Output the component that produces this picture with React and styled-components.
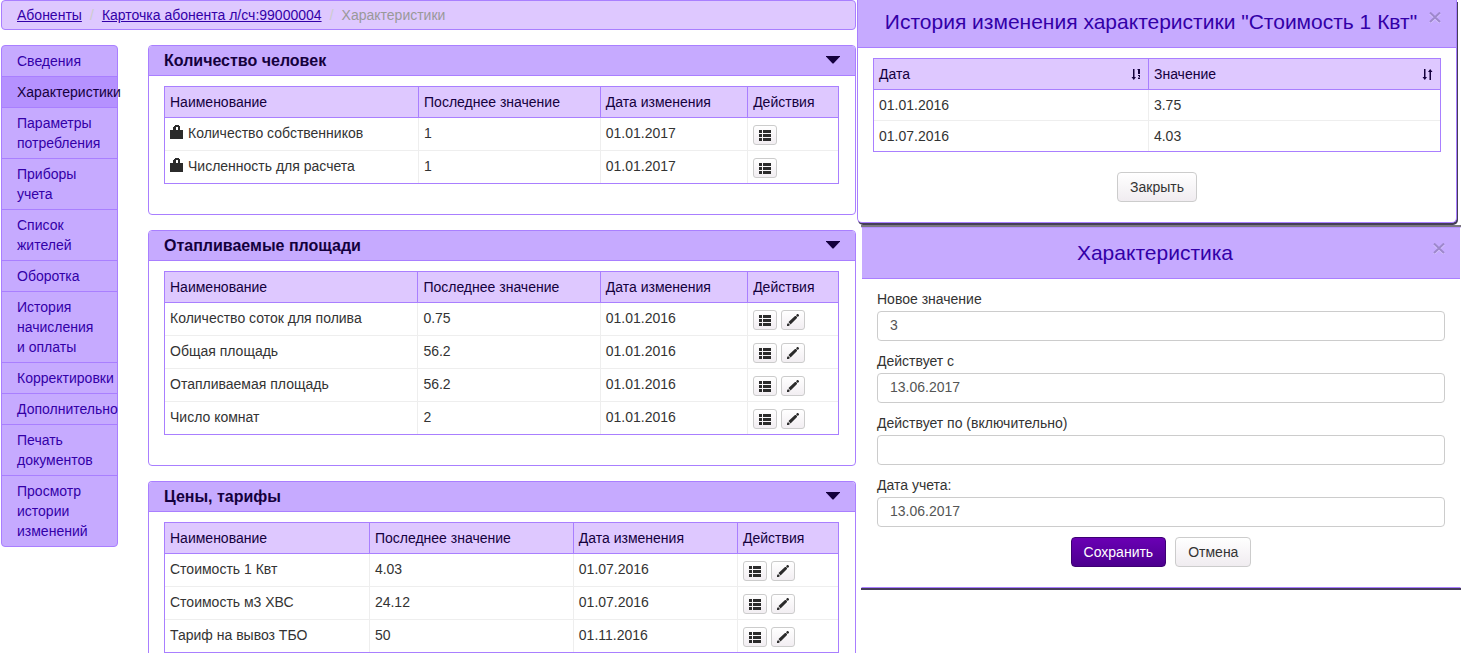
import React from 'react';
import styled, { createGlobalStyle } from 'styled-components';

const GlobalStyle = createGlobalStyle`
  * {
    box-sizing: border-box;
  }

  body {
    margin: 0;
    background-color: white;
    color: #333333;
    font-family: 'Liberation Sans', Arial, sans-serif;
    font-size: 14px;
    line-height: 20px;
  }

  button,
  input {
    font: inherit;
  }
`;

const Page = styled.div`
  display: grid;
  grid-template-columns: minmax(0, 857fr) minmax(0, 604fr);
  align-items: start;
`;

const MainColumn = styled.div`
  padding: 0 1px;
`;

const Breadcrumb = styled.nav`
  display: flex;
  height: 30px;
  padding: 4px 15px;
  border: 1px solid #a97fff;
  border-radius: 4px;
  background-color: #dec8ff;
  white-space: nowrap;
`;

const Crumb = styled.a`
  color: #3300a8;
  text-decoration: underline;
`;

const CrumbSeparator = styled.span`
  width: 20px;
  text-align: center;
  color: #cccccc;
`;

const CurrentCrumb = styled.span`
  color: #999999;
`;

const Columns = styled.div`
  display: flex;
  align-items: flex-start;
  gap: 30px;
  margin-top: 15px;
`;

const Menu = styled.nav`
  flex: none;
  width: 117px;
  border: 1px solid #a97fff;
  border-radius: 4px;
  background-color: #c6aaff;
`;

const MenuLink = styled.a`
  display: block;
  padding: 5px 14px 5px 15px;
  background-color: ${({ $active }) => ($active ? '#b591ff' : 'transparent')};
  color: ${({ $active }) => ($active ? '#14003d' : '#3300a8')};
  text-decoration: none;

  & + & {
    border-top: 1px solid #a97fff;
  }
`;

const Panels = styled.main`
  flex: 1;
  min-width: 0;
  display: flex;
  flex-direction: column;
  gap: 15px;
`;

const Panel = styled.section`
  border: 1px solid #a97fff;
  border-radius: 4px;
  background-color: white;

  &:last-child {
    border-bottom: none;
    border-radius: 4px 4px 0 0;
  }
`;

const PanelHeader = styled.header`
  display: flex;
  align-items: center;
  justify-content: space-between;
  height: 30px;
  padding: 0 15px;
  border-bottom: 1px solid #a97fff;
  border-radius: 3px 3px 0 0;
  background-color: #c6aaff;
`;

const PanelTitle = styled.h2`
  margin: 0;
  color: #14003d;
  font-size: 16px;
  line-height: 20px;
`;

const ToggleButton = styled.button`
  display: flex;
  padding: 0;
  border: none;
  background: none;
  cursor: pointer;
`;

const PanelBody = styled.div`
  padding: 10px 16px 30px 15px;

  ${Panel}:last-child & {
    padding-bottom: 0;
  }
`;

const Table = styled.table`
  width: 100%;
  table-layout: fixed;
  border: 1px solid #a97fff;
  border-collapse: separate;
  border-spacing: 0;
`;

const HeadCell = styled.th`
  width: ${({ $width }) => $width || 'auto'};
  padding: 5px;
  border-bottom: 1px solid #a97fff;
  background-color: #dec8ff;
  color: #14003d;
  font-weight: normal;
  text-align: left;
  white-space: nowrap;

  & + & {
    border-left: 1px solid #a97fff;
  }
`;

const HeadContent = styled.div`
  display: flex;
  align-items: center;
  justify-content: space-between;
  padding-right: 2px;
`;

const Cell = styled.td`
  padding: 5px;
  vertical-align: top;

  & + & {
    border-left: 1px solid #eeeeee;
  }

  tr + tr > & {
    border-top: 1px solid #eeeeee;
  }
`;

const NameContent = styled.div`
  display: flex;
  align-items: flex-start;
  gap: 5px;
`;

const Actions = styled.div`
  display: flex;
  gap: 4px;
  padding-top: 2px;
`;

const IconButton = styled.button`
  display: flex;
  align-items: center;
  justify-content: center;
  width: 24px;
  height: 20px;
  padding: 0;
  border: 1px solid #cccccc;
  border-radius: 3px;
  background: linear-gradient(#ffffff, #f2eef2);
  cursor: pointer;
`;

const Dialogs = styled.div`
  display: flex;
  flex-direction: column;
  gap: 4px;
`;

const Dialog = styled.section`
  margin-right: 4px;
  border: 1px solid #a97fff;
  border-top: none;
  border-radius: 0 0 5px 5px;
  background-color: white;
  box-shadow: 1px 2px 0 #453d58;
`;

const FormDialog = styled(Dialog)`
  margin-right: 0;
  margin-left: 4px;
  border-top: 1px solid #b591ff;
  border-right-color: transparent;
  border-left-color: transparent;
  border-radius: 0;
  box-shadow: 0 2px 0 #453d58, 0 -2px 0 #7b7880;
`;

const DialogHeader = styled.header`
  display: flex;
  align-items: center;
  padding: ${({ $tall }) => ($tall ? '11px 15px 12px' : '8px 15px 12px')};
  border-bottom: 1px solid #a97fff;
  background-color: #c6aaff;
`;

const DialogTitle = styled.h3`
  flex: 1;
  margin: 0;
  color: #3300a8;
  font-size: 21px;
  font-weight: normal;
  line-height: 27px;
  text-align: center;
  white-space: nowrap;
`;

const CloseButton = styled.button`
  display: flex;
  align-self: flex-start;
  padding: 4px 0;
  border: none;
  background: none;
  cursor: pointer;
`;

const DialogBody = styled.div`
  padding: 10px 15px 20px;
`;

const DialogButtons = styled.div`
  display: flex;
  justify-content: center;
  gap: 9px;
  margin-top: ${({ $spaced }) => ($spaced ? '20px' : '10px')};
`;

const Button = styled.button`
  height: 30px;
  padding: 4px 12px;
  border: 1px solid ${({ $primary }) => ($primary ? '#3d0073' : '#cccccc')};
  border-radius: 4px;
  background: ${({ $primary }) =>
    $primary ? 'linear-gradient(#6a00b4, #4c008f)' : 'linear-gradient(#ffffff, #f0ecf0)'};
  color: ${({ $primary }) => ($primary ? 'white' : '#333333')};
  line-height: 20px;
  cursor: pointer;
`;

const Field = styled.div`
  & + & {
    margin-top: 10px;
  }
`;

const Label = styled.label`
  display: block;
  margin-bottom: 2px;
`;

const Input = styled.input`
  display: block;
  width: 100%;
  height: 30px;
  padding: 3px 12px 5px;
  border: 1px solid #cccccc;
  border-radius: 4px;
  background-color: white;
  color: #555555;
  line-height: 20px;
`;

const CaretIcon = () => (
  <svg width="14" height="9" viewBox="0 0 14 9" fill="#14003d">
    <path d="M0 0h14v.500L7.500 7.500h-1L0 .500z" />
  </svg>
);

const LockIcon = () => (
  <svg width="13" height="16" viewBox="0 -2 13 16" fill="#2b2b2b">
    <path fillRule="evenodd" d="M0 5h3V2h1V1h1V0h4v1h1v4h3v9H0zM6 2v3h2V2z" />
  </svg>
);

const ListIcon = () => (
  <svg width="12" height="11" viewBox="0 0 12 11" fill="#2b2b2b">
    <path d="M0 0h3v3H0zM4 0h8v3H4zM0 4h3v3H0zM4 4h8v3H4zM0 8h3v3H0zM4 8h8v3H4z" />
  </svg>
);

const PencilIcon = () => (
  <svg width="12" height="12" viewBox="0 0 12 12" fill="#2b2b2b">
    <path d="M0 12v-1.500L1 9l2 2-1.500 1zM1.500 8L8 2h1l1 1v1l-6.500 6.500zM9 1.200L10.200 0H11l1 1v.800L10.800 3z" />
  </svg>
);

const CloseIcon = () => (
  <svg width="12" height="11" viewBox="0 0 12 11" fill="none" strokeWidth="2">
    <path d="M1 1.500l10 9.500M11 1.500L1 11" stroke="#d9c8ff" />
    <path d="M1 .5l10 9.500M11 .5L1 10" stroke="#9e88cc" />
  </svg>
);

const SortedIcon = () => (
  <svg width="10" height="11" viewBox="0 0 10 11" fill="#14003d">
    <path d="M2 0h1.500v8H5L2.800 11 .5 8H2zM7 0h2v5H7zM6.500 0H8v1H6.500zM7 6h2v2L8 9h1v1H7V9l1-1V7H7z" />
  </svg>
);

const SortIcon = () => (
  <svg width="11" height="11" viewBox="0 0 11 11" fill="#14003d">
    <path d="M2 0h1.500v8H5L2.800 11 .5 8H2zM7.500 11H9V3h1.500L8.200 0 6 3h1.500z" />
  </svg>
);

const menuItems = [
  'Сведения',
  'Характеристики',
  'Параметры потребления',
  'Приборы учета',
  'Список жителей',
  'Оборотка',
  'История начисления и оплаты',
  'Корректировки',
  'Дополнительно',
  'Печать документов',
  'Просмотр истории изменений',
];

const groups = [
  {
    title: 'Количество человек',
    widths: ['37.6%', '27%', '21.9%'],
    locked: true,
    rows: [
      ['Количество собственников', '1', '01.01.2017'],
      ['Численность для расчета', '1', '01.01.2017'],
    ],
  },
  {
    title: 'Отапливаемые площади',
    widths: ['37.5%', '27.1%', '21.9%'],
    rows: [
      ['Количество соток для полива', '0.75', '01.01.2016'],
      ['Общая площадь', '56.2', '01.01.2016'],
      ['Отапливаемая площадь', '56.2', '01.01.2016'],
      ['Число комнат', '2', '01.01.2016'],
    ],
  },
  {
    title: 'Цены, тарифы',
    widths: ['30.3%', '30.3%', '24.4%'],
    rows: [
      ['Стоимость 1 Квт', '4.03', '01.07.2016'],
      ['Стоимость м3 ХВС', '24.12', '01.07.2016'],
      ['Тариф на вывоз ТБО', '50', '01.11.2016'],
    ],
  },
];

const history = [
  ['01.01.2016', '3.75'],
  ['01.07.2016', '4.03'],
];

const fields = [
  { id: 'value', label: 'Новое значение', value: '3' },
  { id: 'from', label: 'Действует с', value: '13.06.2017' },
  { id: 'to', label: 'Действует по (включительно)', value: '' },
  { id: 'accounting', label: 'Дата учета:', value: '13.06.2017' },
];

const GroupPanel = ({ title, widths, locked, rows }) => (
  <Panel>
    <PanelHeader>
      <PanelTitle>{title}</PanelTitle>
      <ToggleButton aria-label="Свернуть">
        <CaretIcon />
      </ToggleButton>
    </PanelHeader>
    <PanelBody>
      <Table>
        <thead>
          <tr>
            <HeadCell $width={widths[0]}>Наименование</HeadCell>
            <HeadCell $width={widths[1]}>Последнее значение</HeadCell>
            <HeadCell $width={widths[2]}>Дата изменения</HeadCell>
            <HeadCell>Действия</HeadCell>
          </tr>
        </thead>
        <tbody>
          {rows.map(([name, value, date]) => (
            <tr key={name}>
              <Cell>
                <NameContent>
                  {locked && <LockIcon />}
                  {name}
                </NameContent>
              </Cell>
              <Cell>{value}</Cell>
              <Cell>{date}</Cell>
              <Cell>
                <Actions>
                  <IconButton aria-label="История">
                    <ListIcon />
                  </IconButton>
                  {!locked && (
                    <IconButton aria-label="Изменить">
                      <PencilIcon />
                    </IconButton>
                  )}
                </Actions>
              </Cell>
            </tr>
          ))}
        </tbody>
      </Table>
    </PanelBody>
  </Panel>
);

const HistoryDialog = () => (
  <Dialog role="dialog" aria-labelledby="history-title">
    <DialogHeader>
      <DialogTitle id="history-title">История изменения характеристики "Стоимость 1 Квт"</DialogTitle>
      <CloseButton aria-label="Закрыть окно">
        <CloseIcon />
      </CloseButton>
    </DialogHeader>
    <DialogBody>
      <Table>
        <thead>
          <tr>
            <HeadCell $width="48.4%">
              <HeadContent>
                Дата
                <SortedIcon />
              </HeadContent>
            </HeadCell>
            <HeadCell>
              <HeadContent>
                Значение
                <SortIcon />
              </HeadContent>
            </HeadCell>
          </tr>
        </thead>
        <tbody>
          {history.map(([date, value]) => (
            <tr key={date}>
              <Cell>{date}</Cell>
              <Cell>{value}</Cell>
            </tr>
          ))}
        </tbody>
      </Table>
      <DialogButtons $spaced>
        <Button type="button">Закрыть</Button>
      </DialogButtons>
    </DialogBody>
  </Dialog>
);

const CharacteristicDialog = () => (
  <FormDialog role="dialog" aria-labelledby="form-title">
    <DialogHeader $tall>
      <DialogTitle id="form-title">Характеристика</DialogTitle>
      <CloseButton aria-label="Закрыть окно">
        <CloseIcon />
      </CloseButton>
    </DialogHeader>
    <DialogBody as="form">
      {fields.map(({ id, label, value }) => (
        <Field key={id}>
          <Label htmlFor={id}>{label}</Label>
          <Input id={id} type="text" defaultValue={value} />
        </Field>
      ))}
      <DialogButtons>
        <Button type="button" $primary>
          Сохранить
        </Button>
        <Button type="button">Отмена</Button>
      </DialogButtons>
    </DialogBody>
  </FormDialog>
);

const App = () => (
  <>
    <GlobalStyle />
    <Page>
      <MainColumn>
        <Breadcrumb>
          <Crumb href="#">Абоненты</Crumb>
          <CrumbSeparator>/</CrumbSeparator>
          <Crumb href="#">Карточка абонента л/сч:99000004</Crumb>
          <CrumbSeparator>/</CrumbSeparator>
          <CurrentCrumb>Характеристики</CurrentCrumb>
        </Breadcrumb>
        <Columns>
          <Menu>
            {menuItems.map((item) => (
              <MenuLink key={item} href="#" $active={item === 'Характеристики'}>
                {item}
              </MenuLink>
            ))}
          </Menu>
          <Panels>
            {groups.map((group) => (
              <GroupPanel key={group.title} {...group} />
            ))}
          </Panels>
        </Columns>
      </MainColumn>
      <Dialogs>
        <HistoryDialog />
        <CharacteristicDialog />
      </Dialogs>
    </Page>
  </>
);

export default App;
